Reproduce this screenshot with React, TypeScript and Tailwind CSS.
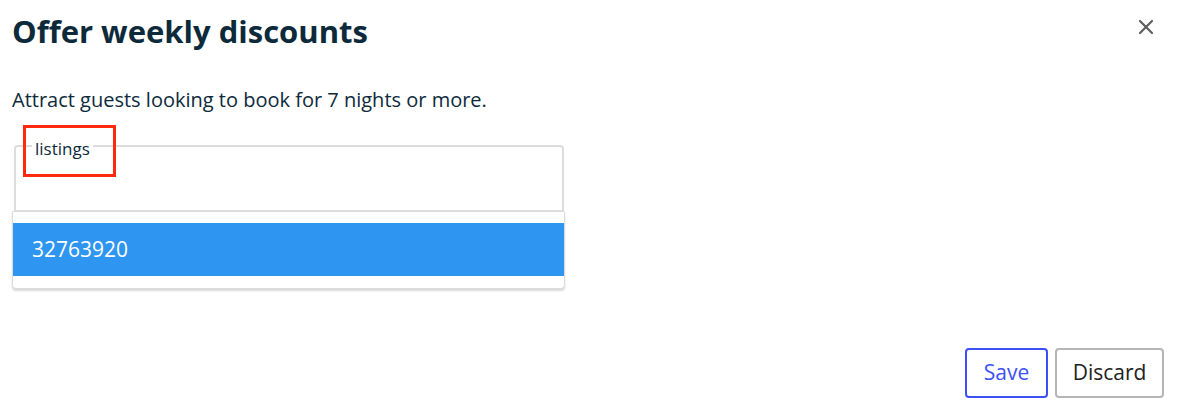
import { X } from 'lucide-react';

export default function App() {
  return (
    <div
      className="relative flex h-[410px] w-[1178px] flex-col bg-white text-[#0d2a3b]"
      style={{ fontFamily: '"Open Sans", "Noto Sans", sans-serif' }}
    >
      {/* header */}
      <div className="flex items-start justify-between pl-3 pr-5 pt-[11px]">
        <h1 className="text-[31px] font-bold leading-[40px]">Offer weekly discounts</h1>
        <button type="button" className="mt-[4px] text-[#5f5f5f]">
          <X size={24} strokeWidth={2.2} />
        </button>
      </div>

      <p className="mt-[37px] pl-3 text-[20px] leading-6">
        Attract guests looking to book for 7 nights or more.
      </p>

      {/* listings field */}
      <div className="relative ml-[14px] mt-[21px] w-[550px]">
        <fieldset className="h-[79px] rounded-t-[4px] border-2 border-[#dcdcdc]">
          <legend className="ml-[16px] px-[3px] pt-[6px] text-[17px] leading-5">listings</legend>
        </fieldset>

        {/* annotation box */}
        <div className="pointer-events-none absolute left-[9px] top-[-8px] h-[52px] w-[93px] border-[3px] border-[#ff2a0e]" />

        {/* dropdown menu */}
        <div className="absolute left-[-2px] top-[78px] w-[553px] rounded-b-[4px] border border-[#dcdcdc] bg-white pb-[12px] pt-[11px] shadow-[0_2px_2px_rgba(0,0,0,0.15)]">
          <div className="flex h-[53px] items-center bg-[#2e96f0] px-[19px] text-[21px] text-white">
            32763920
          </div>
        </div>
      </div>

      {/* footer */}
      <div className="mt-auto flex justify-end gap-[7px] pb-[12px] pr-[14px]">
        <button
          type="button"
          className="h-[50px] w-[83px] rounded-[4px] border-2 border-[#3d50f6] text-[21px] text-[#3d50f6]"
        >
          Save
        </button>
        <button
          type="button"
          className="h-[50px] w-[109px] rounded-[4px] border-2 border-[#b5b5b5] text-[21px] text-[#222]"
        >
          Discard
        </button>
      </div>
    </div>
  );
}
